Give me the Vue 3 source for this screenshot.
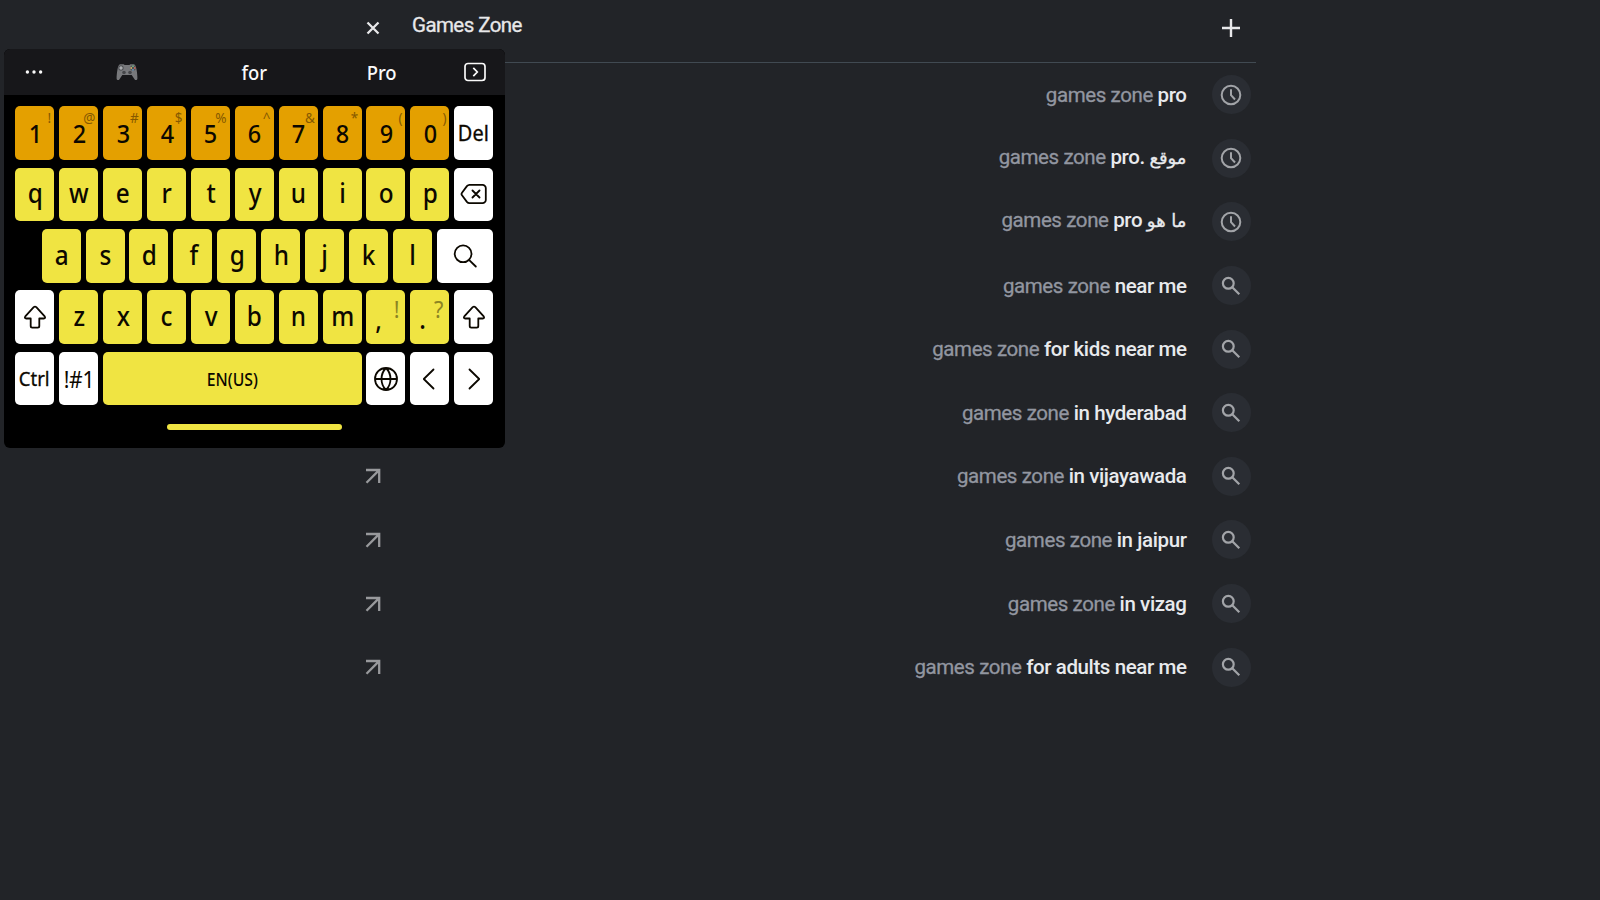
<template>
    <div class="page">
        <div class="search">
            <!-- Search bar -->
            <header class="search-bar">
                <svg class="clear" viewBox="0 0 14 14">
                    <path d="M1.5 1.5l11 11M12.5 1.5l-11 11" />
                </svg>
                <span class="query">Games Zone</span>
                <svg class="plus" viewBox="0 0 18 18">
                    <path d="M9 0v18M0 9h18" />
                </svg>
            </header>

            <!-- Suggestions -->
            <ul class="suggestions">
                <li v-for="(item, index) in suggestions" :key="index" class="suggestion">
                    <svg class="arrow" viewBox="0 0 16 16">
                        <path d="M1.5 14.8L13.6 2.6M1 2h13.2v13" />
                    </svg>
                    <p class="text" :class="{ raised: item.arabic }">
                        <span class="typed">games zone </span><span class="rest">{{ item.text }}</span><span v-if="item.arabic" class="arabic" dir="rtl">{{ item.arabic }}</span>
                    </p>
                    <span class="badge">
                        <svg v-if="item.recent" class="clock" viewBox="0 0 22 22">
                            <circle cx="11" cy="11" r="9.3" />
                            <path d="M11 5.2v6l4 4.3" />
                        </svg>
                        <svg v-else class="lens" viewBox="0 0 20 20">
                            <circle cx="7.3" cy="7.3" r="5.4" />
                            <path d="M11.3 11.3l7 7" />
                        </svg>
                    </span>
                </li>
            </ul>
        </div>

        <!-- Floating keyboard -->
        <div class="keyboard">
            <div class="predictions">
                <svg class="dots" viewBox="0 0 18 4">
                    <circle cx="2.4" cy="2" r="1.7" />
                    <circle cx="9" cy="2" r="1.7" />
                    <circle cx="15.6" cy="2" r="1.7" />
                </svg>
                <svg class="gamepad" viewBox="0 0 22 18">
                    <path class="body" d="M4.2 1.2h3.4l1 .9h4.8l1-.9h3.4c1.6.5 2.2 2.2 2.7 5.1.5 3 1 6.7.9 9.2-.1 1.8-1.9 2.1-2.9.7L15.7 12H6.3l-2.8 4.2c-1 1.4-2.8 1.1-2.9-.7-.1-2.5.4-6.2.9-9.2C2 3.4 2.6 1.7 4.2 1.2z" />
                    <circle class="pad" cx="5" cy="5" r="2.7" />
                    <path class="cross" d="M5 3.2v3.6M3.2 5h3.6" />
                    <circle class="stick" cx="8" cy="9.5" r="2.2" />
                    <circle class="stick" cx="14" cy="9.5" r="2.2" />
                    <circle class="pad" cx="17" cy="5" r="2.8" />
                    <circle cx="17" cy="3.2" r=".9" fill="#77b58a" />
                    <circle cx="18.8" cy="5" r=".9" fill="#c66a5c" />
                    <circle cx="17" cy="6.8" r=".9" fill="#70a2c8" />
                    <circle cx="15.2" cy="5" r=".9" fill="#d0b565" />
                </svg>
                <span class="word">for</span>
                <span class="word">Pro</span>
                <svg class="expand" viewBox="0 0 22 20">
                    <rect x="1" y="1.5" width="20" height="17" rx="3" />
                    <path d="M9.3 5.8l4 4.2-4 4.2" />
                </svg>
            </div>

            <div class="rows">
                <div v-for="(row, r) in rows" :key="r" class="row">
                    <button v-for="(key, k) in row" :key="k" class="key" :class="key.type">
                        <span v-if="key.label" class="label">{{ key.label }}</span>
                        <sup v-if="key.alt">{{ key.alt }}</sup>
                        <svg v-if="key.icon" viewBox="0 0 28 28">
                            <path :d="icons[key.icon]" />
                        </svg>
                    </button>
                </div>
            </div>
            <div class="handle"></div>
        </div>
    </div>
</template>

<script setup>
const suggestions = [
    { text: 'pro', recent: true },
    { text: 'pro. ', arabic: 'موقع', recent: true },
    { text: 'pro ', arabic: 'ما هو', recent: true },
    { text: 'near me' },
    { text: 'for kids near me' },
    { text: 'in hyderabad' },
    { text: 'in vijayawada' },
    { text: 'in jaipur' },
    { text: 'in vizag' },
    { text: 'for adults near me' },
]

const icons = {
    backspace: 'M9.5 4.8H22.5a3.3 3.3 0 0 1 3.3 3.3V19.9a3.3 3.3 0 0 1-3.3 3.3H9.5q-1.5 0-2.6-1.3L2 15.3q-1-1.3 0-2.6L6.9 6.1q1.1-1.3 2.6-1.3zM12.5 10.5l7 7M19.5 10.5l-7 7',
    search: 'M20.5 11.8a8.4 8.4 0 1 1-16.8 0a8.4 8.4 0 1 1 16.8 0zM18 17.8l6.8 6.7',
    shift: 'M12.7 4.2q1.3-1.2 2.6 0l8.4 9.2q1.2 2-1 2.1H18.3v7.5q0 1.6-1.6 1.6h-5.4q-1.6 0-1.6-1.6v-7.5H5.3q-2.2-.1-1-2.1z',
    globe: 'M25 14a11 11 0 1 1-22 0a11 11 0 1 1 22 0zM3 14h22M14 3c-6 6-6 16 0 22M14 3c6 6 6 16 0 22',
    left: 'M17.5 4.5L7.8 14l9.7 9.5',
    right: 'M9.5 4.5l9.7 9.5-9.7 9.5',
}

const letters = (text) => text.split('').map((label) => ({ label, type: 'letter' }))

const rows = [
    [
        ...'1234567890'.split('').map((label, i) => ({ label, alt: '!@#$%^&*()'[i], type: 'digit' })),
        { label: 'Del', type: 'fn del' },
    ],
    [...letters('qwertyuiop'), { icon: 'backspace', type: 'fn' }],
    [...letters('asdfghjkl'), { icon: 'search', type: 'fn wide' }],
    [
        { icon: 'shift', type: 'fn' },
        ...letters('zxcvbnm'),
        { label: ',', alt: '!', type: 'letter punct' },
        { label: '.', alt: '?', type: 'letter punct' },
        { icon: 'shift', type: 'fn' },
    ],
    [
        { label: 'Ctrl', type: 'fn ctrl' },
        { label: '!#1', type: 'fn symbols' },
        { label: 'EN(US)', type: 'space' },
        { icon: 'globe', type: 'fn' },
        { icon: 'left', type: 'fn' },
        { icon: 'right', type: 'fn' },
    ],
]
</script>

<style>
body {
    margin: 0;
    background: #222428;
}
</style>

<style scoped>
.page {
    position: relative;
    height: 900px;
    overflow: hidden;
    background: #222428;
    font-family: Roboto, "Noto Sans", sans-serif;
}

svg {
    display: block;
    fill: none;
    stroke: currentColor;
}

.search {
    width: 916px;
    margin-left: 340px;
}

/* Search bar */
.search-bar {
    display: flex;
    align-items: flex-start;
    height: 62px;
    padding: 0 16px 0 26px;
    border-bottom: 1px solid #414a52;
    color: #e8e8ea;
}

.clear {
    width: 14px;
    height: 14px;
    margin-top: 20.5px;
    stroke-width: 2.3;
}

.query {
    flex: 1;
    margin: 11px 0 0 32px;
    font-size: 20.5px;
    line-height: 28px;
    letter-spacing: -0.58px;
    -webkit-text-stroke: 0.3px currentColor;
}

.plus {
    width: 18px;
    height: 18px;
    margin-top: 18.5px;
    stroke-width: 2.4;
}

/* Suggestions */
.suggestions {
    margin: 0;
    padding: 0;
    list-style: none;
}

.suggestion {
    display: flex;
    align-items: center;
    height: 63.6px;
    padding: 0 5.5px 0 24.5px;
}

.arrow {
    width: 16px;
    height: 16px;
    color: #98999c;
    stroke-width: 2.3;
}

.text {
    flex: 1;
    margin: 0 25px 0 0;
    font-size: 20.5px;
    line-height: 28px;
    letter-spacing: -0.4px;
    text-align: right;
    white-space: pre;
    color: #e8eaed;
}

.text.raised {
    position: relative;
    top: -1.5px;
}

.typed {
    color: #9296a0;
    -webkit-text-stroke: 0.3px currentColor;
}

.rest {
    font-weight: 500;
}

.arabic {
    font-family: "DejaVu Sans", sans-serif;
    font-size: 18px;
    line-height: 20px;
    letter-spacing: 0;
    -webkit-text-stroke: 0.3px currentColor;
}

.badge {
    display: flex;
    align-items: center;
    justify-content: center;
    width: 39px;
    height: 39px;
    border-radius: 50%;
    background: #2a2d33;
    color: #a2a4a8;
}

.clock {
    width: 22px;
    height: 22px;
    stroke-width: 2;
}

.lens {
    width: 20px;
    height: 20px;
    stroke-width: 2.2;
}

/* Keyboard */
.keyboard {
    position: absolute;
    top: 49px;
    left: 4px;
    width: 501px;
    height: 398.5px;
    overflow: hidden;
    border-radius: 6px;
    background: #000;
    font-family: "Noto Sans", sans-serif;
}

.predictions {
    display: grid;
    grid-template-columns: 59.5px repeat(3, 127.3px) 1fr;
    align-items: center;
    justify-items: center;
    height: 46px;
    background: #17171a;
    color: #fafafa;
    font-size: 20.5px;
    font-weight: 500;
    line-height: 44px;
}

.word {
    transform: scaleX(0.9);
}

.dots {
    width: 18px;
    height: 4px;
    fill: currentColor;
    stroke: none;
}

.gamepad {
    width: 22px;
    height: 18px;
    stroke: none;
}

.gamepad .body {
    fill: #77787b;
}

.gamepad .pad {
    fill: #515256;
}

.gamepad .cross {
    stroke: #c3c5c8;
    stroke-width: 1.2;
}

.gamepad .stick {
    fill: #46474a;
    stroke: #929396;
    stroke-width: 0.5;
}

.expand {
    width: 22px;
    height: 20px;
    stroke-width: 1.7;
}

.rows {
    display: flex;
    flex-direction: column;
    gap: 7.8px;
    padding: 11.3px 11.8px 0 11.2px;
}

.row {
    display: flex;
    justify-content: flex-end;
    gap: 4.9px;
}

.key {
    position: relative;
    display: flex;
    align-items: center;
    justify-content: center;
    width: 39px;
    height: 53.6px;
    padding: 0;
    border: none;
    border-radius: 5px;
    font-family: inherit;
    font-size: 27px;
    font-weight: 500;
    line-height: 30px;
    color: #0c0800;
    flex-shrink: 0;
}

.label {
    transform: scaleX(0.9);
}

.digit {
    background: #e4a000;
    font-size: 26px;
    line-height: 24px;
}

.letter .label,
.digit .label {
    padding-left: 1px;
}

.letter,
.space {
    background: #f0e442;
}

.letter .label {
    padding-bottom: 2px;
}

.fn {
    background: #fff;
    font-weight: 400;
}

.del {
    font-size: 21px;
    -webkit-text-stroke: 0.3px currentColor;
}

.del .label,
.ctrl .label {
    transform: scaleX(0.95);
}

.wide {
    width: 56.5px;
}

.ctrl {
    font-size: 19.5px;
    -webkit-text-stroke: 0.3px currentColor;
}

.symbols {
    font-size: 23.5px;
    letter-spacing: -0.3px;
}

.space {
    width: 258.6px;
    font-size: 17.5px;
}

.key sup {
    position: absolute;
    top: 3px;
    right: 3px;
    font-size: 15px;
    font-weight: 400;
    line-height: 16px;
    color: #845900;
    transform: scaleX(0.9);
    transform-origin: right;
}

.key.punct .label {
    padding: 4px 17px 0 0;
}

.key.punct sup {
    top: 5px;
    right: 6px;
    font-size: 24px;
    line-height: 28px;
    color: #8c8422;
}

.key svg {
    width: 28px;
    height: 28px;
    stroke-width: 1.8;
    stroke-linecap: round;
    stroke-linejoin: round;
}

.handle {
    width: 175px;
    height: 6.5px;
    margin: 18.5px auto 0;
    border-radius: 3px;
    background: #f0e442;
}
</style>
